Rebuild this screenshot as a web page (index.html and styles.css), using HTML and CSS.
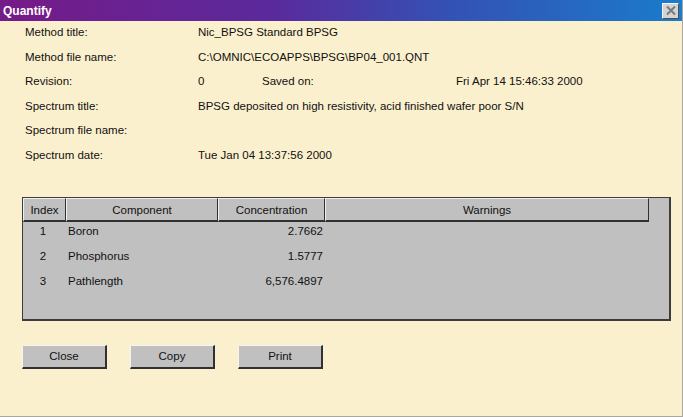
FILE: index.html
```html
<!DOCTYPE html>
<html lang="en">
<head>
    <meta charset="UTF-8">
    <title>Quantify</title>
    <link rel="stylesheet" href="styles.css">
</head>
<body>
    <div class="window">
        <div class="titlebar">
            <span class="title">Quantify</span>
            <div class="close-btn">
                <svg width="12" height="11" viewBox="0 0 12 11">
                    <path d="M2 1.5 L10 9.5 M10 1.5 L2 9.5" stroke="#7a7a7a" stroke-width="2"/>
                </svg>
            </div>
        </div>

        <div class="content">
            <div class="info">
                <div class="label">Method title:</div>
                <div class="value">Nic_BPSG Standard BPSG</div>

                <div class="label">Method file name:</div>
                <div class="value">C:\OMNIC\ECOAPPS\BPSG\BP04_001.QNT</div>

                <div class="label">Revision:</div>
                <div class="value revision">
                    <span class="rev-num">0</span>
                    <span class="saved-label">Saved on:</span>
                    <span>Fri Apr 14 15:46:33 2000</span>
                </div>

                <div class="label">Spectrum title:</div>
                <div class="value">BPSG deposited on high resistivity, acid finished wafer poor S/N</div>

                <div class="label">Spectrum file name:</div>
                <div class="value"></div>

                <div class="label">Spectrum date:</div>
                <div class="value">Tue Jan 04 13:37:56 2000</div>
            </div>

            <div class="results">
                <div class="head">
                    <div class="hcell col-index">Index</div>
                    <div class="hcell col-comp">Component</div>
                    <div class="hcell col-conc">Concentration</div>
                    <div class="hcell col-warn">Warnings</div>
                </div>
                <div class="row">
                    <div class="col-index">1</div>
                    <div class="col-comp">Boron</div>
                    <div class="col-conc">2.7662</div>
                </div>
                <div class="row">
                    <div class="col-index">2</div>
                    <div class="col-comp">Phosphorus</div>
                    <div class="col-conc">1.5777</div>
                </div>
                <div class="row">
                    <div class="col-index">3</div>
                    <div class="col-comp">Pathlength</div>
                    <div class="col-conc">6,576.4897</div>
                </div>
            </div>

            <div class="buttons">
                <button>Close</button>
                <button>Copy</button>
                <button>Print</button>
            </div>
        </div>
    </div>
</body>
</html>
```

FILE: styles.css
```css
body {
    margin: 0;
    padding: 0;
    font-family: 'Liberation Sans', Arial, sans-serif;
    font-size: 11.5px;
    color: #111;
    background: #fbf0cd;
}
.window {
    width: 682px;
    height: 416px;
    border-right: 1px solid #a8a8a0;
    border-bottom: 1px solid #a8a8a0;
    background: #fbf0cd;
    display: flex;
    flex-direction: column;
}
.titlebar {
    height: 21px;
    display: flex;
    align-items: center;
    justify-content: space-between;
    padding: 0 3px 0 3px;
    background: linear-gradient(to right, #761a88 0%, #5a2a9c 40%, #3550b4 65%, #1a7ccc 100%);
}
.title {
    color: white;
    font-weight: bold;
    font-size: 12px;
}
.close-btn {
    width: 15px;
    height: 14px;
    background: #d4d4d4;
    border-top: 1px solid #f4f4f4;
    border-left: 1px solid #f4f4f4;
    border-right: 1px solid #505050;
    border-bottom: 1px solid #505050;
    display: flex;
    align-items: center;
    justify-content: center;
}
.content {
    padding: 0 0 0 22px;
}
.info {
    display: grid;
    grid-template-columns: 173px auto;
    grid-auto-rows: 22px;
    row-gap: 2.6px;
    align-items: center;
    padding-left: 3px;
}
.revision {
    display: flex;
}
.rev-num {
    width: 64px;
}
.saved-label {
    width: 194px;
}
.results {
    width: 646px;
    height: 121px;
    margin-top: 31px;
    background: #c0c0c0;
    border: 1px solid #3c3c3c;
    border-right-width: 2px;
    border-bottom-width: 2px;
}
.head {
    display: flex;
    height: 24px;
}
.hcell {
    box-sizing: border-box;
    height: 24px;
    line-height: 22px;
    text-align: center;
    border-top: 1px solid #f0f0f0;
    border-left: 1px solid #f0f0f0;
    border-right: 1px solid #303030;
    border-bottom: 2px solid #303030;
}
.col-index {
    width: 43px;
}
.col-comp {
    width: 152px;
}
.col-conc {
    width: 107px;
}
.col-warn {
    width: 324px;
}
.row {
    display: flex;
    height: 25px;
    line-height: 18px;
}
.row .col-index {
    text-align: center;
    box-sizing: border-box;
    padding-right: 3px;
}
.row .col-comp {
    padding-left: 2px;
    box-sizing: border-box;
}
.row .col-conc {
    text-align: right;
    box-sizing: border-box;
    padding-right: 2px;
}
.buttons {
    display: flex;
    gap: 23px;
    margin-top: 24px;
}
button {
    width: 85px;
    height: 24px;
    font-family: 'Liberation Sans', Arial, sans-serif;
    font-size: 11.5px;
    color: #111;
    background: #c0c0c0;
    border-top: 1px solid #f4f4f4;
    border-left: 1px solid #f4f4f4;
    border-right: 2px solid #303030;
    border-bottom: 2px solid #303030;
    padding: 0;
}
```
